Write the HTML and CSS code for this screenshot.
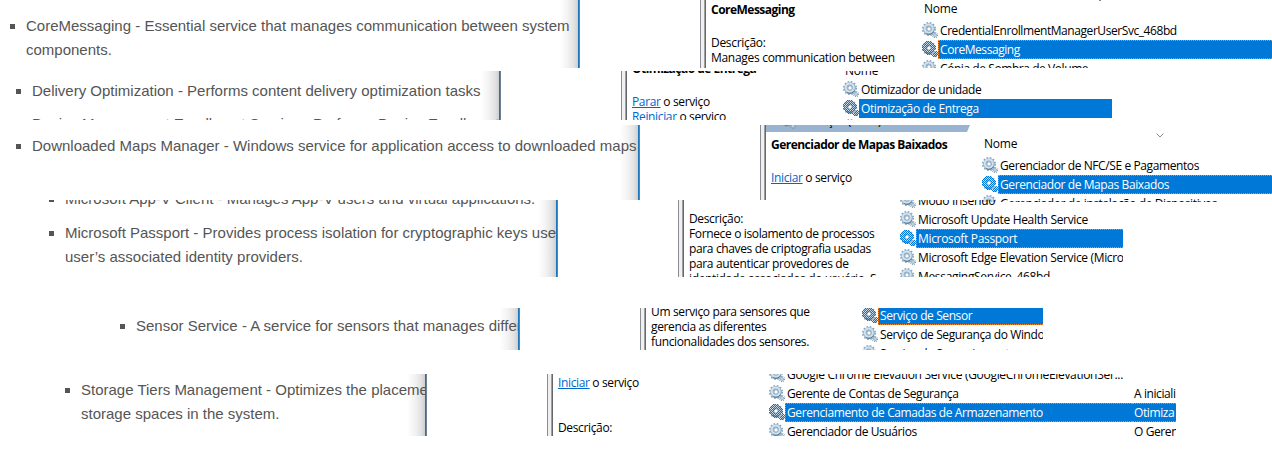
FILE: index.html
```html
<!DOCTYPE html>
<html lang="pt-BR">
<head>
<meta charset="utf-8">
<title>Serviços</title>
<link rel="stylesheet" href="styles.css">
</head>
<body>
<svg class="defs" width="0" height="0">
  <defs>
    <pattern id="dither" width="2" height="2" patternUnits="userSpaceOnUse">
      <path d="M0 0h1v1h-1zM1 1h1v1h-1z" fill="#0078d7"/>
    </pattern>
    <symbol id="gear" viewBox="0 0 16 16">
      <circle cx="7" cy="7" r="6.2" fill="none" stroke="#8ba6bd" stroke-width="1.8" stroke-dasharray="1.6 1.65"/>
      <circle cx="7" cy="7" r="4.2" fill="none" stroke="#8fb0ca" stroke-width="3.4"/>
      <circle cx="6.7" cy="6.6" r="4" fill="none" stroke="#cfe2f0" stroke-width="2"/>
      <circle cx="7" cy="7" r="2.2" fill="#fff" stroke="#7893ab" stroke-width=".9"/>
      <path d="M11.600 9.500A5.400 5.400 0 0 1 4 11.600" fill="none" stroke="#58788f" stroke-width="1"/>
      <circle cx="13" cy="13" r="2.5" fill="none" stroke="#7f9bb2" stroke-width="1.2" stroke-dasharray="1 .96"/>
      <circle cx="13" cy="13" r="1.4" fill="#e3eef6" stroke="#91adc3" stroke-width="1"/>
    </symbol>
    <symbol id="gear-on" viewBox="0 0 16 16">
      <use href="#gear" width="16" height="16"/>
      <path d="M7 0a7 7 0 1 0 0 14a7 7 0 1 0 0-14zM7 5a2 2 0 1 1 0 4a2 2 0 1 1 0-4zM13 10a3 3 0 1 0 0 6a3 3 0 1 0 0-6z" fill="url(#dither)" fill-rule="evenodd" shape-rendering="crispEdges"/>
    </symbol>
  </defs>
</svg>

<main class="page">
  <section class="strip core">
    <div class="article"><ul>
      <li>CoreMessaging - Essential service that manages communication between system<br>components.</li>
    </ul></div>
    <div class="edge"></div>
    <div class="divider"></div>
    <div class="details">
      <h2>CoreMessaging</h2>
      <p class="gap-18">Descrição:</p>
      <p>Manages communication between</p>
    </div>
    <div class="list">
      <div class="head">Nome<svg class="sort" width="8" height="5"><path d="M.5 .5l3.500 3.500l3.500-3.500" fill="none" stroke="#8a8a8a"/></svg></div>
      <div class="row"><svg><use href="#gear"/></svg><span>CredentialEnrollmentManagerUserSvc_468bd</span></div>
      <div class="row on focus"><svg><use href="#gear-on"/></svg><span>CoreMessaging</span></div>
      <div class="row"><svg><use href="#gear"/></svg><span>Cópia de Sombra de Volume</span></div>
    </div>
  </section>

  <section class="strip delivery">
    <div class="article"><ul>
      <li>Delivery Optimization - Performs content delivery optimization tasks</li>
      <li class="plain">Device Management Enrollment Service - Performs Device Enrollment</li>
    </ul></div>
    <div class="edge"></div>
    <div class="divider"></div>
    <div class="details">
      <h2>Otimização de Entrega</h2>
      <p class="gap-18"><a>Parar</a> o serviço</p>
      <p><a>Reiniciar</a> o serviço</p>
    </div>
    <div class="list">
      <div class="head">Nome</div>
      <div class="row"><svg><use href="#gear"/></svg><span>Otimizador de unidade</span></div>
      <div class="row on"><svg><use href="#gear-on"/></svg><span>Otimização de Entrega</span></div>
      <div class="row"><svg><use href="#gear"/></svg></div>
    </div>
  </section>

  <section class="strip maps">
    <div class="article"><ul>
      <li>Downloaded Maps Manager - Windows service for application access to downloaded maps</li>
    </ul></div>
    <div class="edge"></div>
    <div class="divider"></div>
    <div class="details">
      <div class="tab"><svg width="16" height="16"><use href="#gear"/></svg><span>Serviços (Local)</span></div>
      <h2>Gerenciador de Mapas Baixados</h2>
      <p class="gap-18"><a>Iniciar</a> o serviço</p>
    </div>
    <div class="list">
      <div class="head">Nome<svg class="sort" width="8" height="5"><path d="M.5 .5l3.500 3.500l3.500-3.500" fill="none" stroke="#8a8a8a"/></svg></div>
      <div class="row"><svg><use href="#gear"/></svg><span>Gerenciador de NFC/SE e Pagamentos</span></div>
      <div class="row on focus"><svg><use href="#gear-on"/></svg><span>Gerenciador de Mapas Baixados</span></div>
      <div class="row"><svg><use href="#gear"/></svg><span>Gerenciador de instalação de Dispositivos</span></div>
    </div>
  </section>

  <section class="strip passport">
    <div class="article"><ul>
      <li>Microsoft App-V Client - Manages App-V users and virtual applications.</li>
      <li>Microsoft Passport - Provides process isolation for cryptographic keys used<br>user’s associated identity providers.</li>
    </ul></div>
    <div class="edge"></div>
    <div class="divider"></div>
    <div class="details">
      <p>Descrição:</p>
      <p>Fornece o isolamento de processos</p>
      <p>para chaves de criptografia usadas</p>
      <p>para autenticar provedores de</p>
      <p>identidade associados do usuário. S</p>
    </div>
    <div class="list">
      <div class="row"><svg><use href="#gear"/></svg><span>Modo Inserido</span></div>
      <div class="row"><svg><use href="#gear"/></svg><span>Microsoft Update Health Service</span></div>
      <div class="row on focus"><svg><use href="#gear-on"/></svg><span>Microsoft Passport</span></div>
      <div class="row"><svg><use href="#gear"/></svg><span>Microsoft Edge Elevation Service (MicrosoftEdge)</span></div>
      <div class="row"><svg><use href="#gear"/></svg><span>MessagingService_468bd</span></div>
    </div>
  </section>

  <section class="strip sensor">
    <div class="article"><ul>
      <li>Sensor Service - A service for sensors that manages different</li>
    </ul></div>
    <div class="edge"></div>
    <div class="divider"></div>
    <div class="details">
      <p>Um serviço para sensores que</p>
      <p>gerencia as diferentes</p>
      <p>funcionalidades dos sensores.</p>
    </div>
    <div class="list">
      <div class="row on focus"><svg><use href="#gear-on"/></svg><span>Serviço de Sensor</span></div>
      <div class="row"><svg><use href="#gear"/></svg><span>Serviço de Segurança do Windows</span></div>
      <div class="row"><svg><use href="#gear"/></svg><span>Serviço de Sensoriamento</span></div>
    </div>
  </section>

  <section class="strip storage">
    <div class="article"><ul>
      <li>Storage Tiers Management - Optimizes the placement<br>storage spaces in the system.</li>
    </ul></div>
    <div class="edge"></div>
    <div class="divider"></div>
    <div class="details">
      <p><a>Iniciar</a> o serviço</p>
      <p class="gap-30">Descrição:</p>
    </div>
    <div class="list">
      <div class="row wide"><svg><use href="#gear"/></svg><span>Google Chrome Elevation Service (GoogleChromeElevationSer...</span></div>
      <div class="row"><svg><use href="#gear"/></svg><span>Gerente de Contas de Segurança</span><span>A inicialização</span></div>
      <div class="row on focus"><svg><use href="#gear-on"/></svg><span>Gerenciamento de Camadas de Armazenamento</span><span>Otimiza</span></div>
      <div class="row"><svg><use href="#gear"/></svg><span>Gerenciador de Usuários</span><span>O Gerenciador</span></div>
    </div>
  </section>
</main>
</body>
</html>
```

FILE: styles.css
```css
* { box-sizing: border-box; }
body {
  margin: 0;
  background: #fff;
  overflow: hidden;
}
.defs { display: block; height: 0; }
.page {
  display: flex;
  flex-direction: column;
  height: 474px;
  overflow: hidden;
  font: 12px/15px "Open Sans", "Noto Sans", sans-serif;
  letter-spacing: -.4px;
  color: #000;
}

/* Each strip is a clipped row: article, window edge, blank, divider, details, list */
.strip {
  display: grid;
  flex: none;
  width: 1272px;
  overflow: hidden;
}
.strip > * { min-width: 0; overflow: hidden; }

.core     { height: 68px; grid-template-columns: 578px 122px 6px 216px 350px; margin-bottom: 3px; }
.delivery { height: 49px; grid-template-columns: 499px 122px 6px 216px 269px; margin-bottom: 5px; }
.maps     { height: 77px; grid-template-columns: 638px 122px 6px 216px 290px; margin-bottom: -2px; }
.passport { height: 77px; grid-template-columns: 556px 122px 6px 216px 223px; margin-bottom: 31px; }
.sensor   { height: 42px; grid-template-columns: 518px 122px 6px 216px 181px; margin-bottom: 24px; }
.storage  { height: 62px; grid-template-columns: 425px 122px 6px 216px 407px; }
.maps > .article, .maps > .edge, .maps > .divider { height: 75px; }

/* Article */
.article {
  background: linear-gradient(to left, #cfcfcf 0, #e2e2e2 4px, #f2f2f2 10px, #fff 18px);
  font: 15px/24px "Liberation Sans", Arial, sans-serif;
  letter-spacing: 0;
  color: #555;
  white-space: nowrap;
}
.article ul { margin: 0; padding: 0; list-style: none; }
.article li { padding-left: 16px; background: linear-gradient(#555, #555) 0 10px / 5px 5px no-repeat; }
.article li.plain { background: none; }
.core .article     { padding: 14px 0 0 10px; }
.delivery .article { padding: 8px 0 0 16px; }
.delivery li + li  { margin-top: 9px; }
.maps .article     { padding: 9px 0 0 16px; }
.passport .article { padding-left: 49px; }
.passport ul       { margin-top: -13px; }
.passport li + li  { margin-top: 10px; }
.sensor .article   { padding: 6px 0 0 120px; }
.storage .article  { padding: 4px 0 0 65px; }

.edge { background: linear-gradient(to right, #1b75bc 0 1px, #6b8197 1px 2px, #fff 2px); }
.divider {
  background: linear-gradient(to right, #8a8d93 0 1px, #f0f0f0 1px 4px, #a0a0a0 4px 5px, #64676b 5px 6px);
}

/* Service details */
.details { padding-left: 5px; white-space: nowrap; letter-spacing: -.36px; }
.details h2 { margin: 0; height: 15px; font-size: 12px; line-height: 15px; font-weight: 700; letter-spacing: -.52px; }
.details p { margin: 0; height: 15px; }
.details p.gap-18 { margin-top: 18px; }
.details p.gap-30 { margin-top: 30px; }
.details a { color: #0066cc; text-decoration: underline; text-underline-offset: 1px; }
.core .details { padding-top: 2px; letter-spacing: -.3px; }
.delivery h2 { margin-top: -10px; }
.maps .details { padding-left: 0; }
.maps .details > :not(.tab) { margin-left: 5px; }
.maps h2 { margin-top: 5px; }
.passport .details { padding-top: 11px; }
.sensor .details p:first-child { margin-top: -4px; }
.storage .details { padding-top: 1px; }
.tab {
  display: flex;
  width: 204px;
  height: 7px;
  padding-left: 14px;
  gap: 6px;
  overflow: hidden;
  background: #99b4d1;
  clip-path: polygon(0 0, 100% 0, calc(100% - 3px) 100%, 0 100%);
}
.tab svg, .tab span { flex: none; margin-top: -12px; }

/* Service list */
.head { position: relative; height: 19px; line-height: 19px; padding-left: 2px; letter-spacing: -.2px; }
.sort { position: absolute; left: 174px; top: -3px; }
.core .head { height: 21px; line-height: 18px; }
.delivery .head { height: 19px; margin-top: -10px; }
.maps .head { height: 31px; padding-top: 9px; }
.maps .sort { top: 8px; }
.row {
  display: grid;
  grid-template-columns: 16px 1fr;
  height: 19px;
  line-height: 19px;
  white-space: nowrap;
}
.row svg { width: 16px; height: 16px; margin-top: 1px; }
.row span { height: 19px; padding-left: 2px; overflow: hidden; }
.row.on span { color: #fff; background: #0078d7; }
.row.on.focus span {
  border: 1px dotted #ff8728;
  border-right: 0;
  padding-left: 1px;
  line-height: 17px;
}
.row.on.focus span + span { border-left: 0; padding-left: 2px; }
.core .row { letter-spacing: -.43px; }
.passport .list { letter-spacing: -.33px; }
.passport .row:first-child { margin-top: -9px; }
.sensor .row:first-child { margin-top: -2px; }
.storage .row { grid-template-columns: 16px 347px 1fr; }
.storage .row.wide { letter-spacing: -.3px; }
.storage .row:first-child { margin-top: -9px; }
```
